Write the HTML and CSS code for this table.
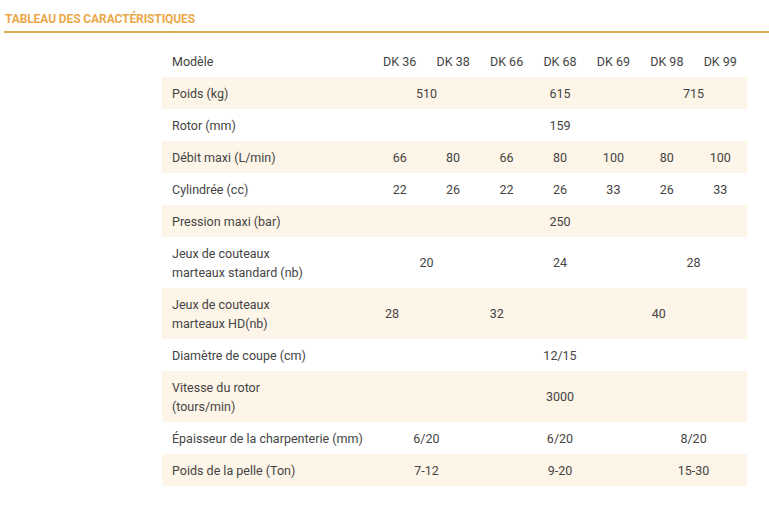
FILE: index.html
```html
<!DOCTYPE html>
<html lang="fr">
<head>
<meta charset="utf-8">
<title>Tableau des caractéristiques</title>
<link rel="stylesheet" href="styles.css">
</head>
<body>
<section class="specs">
  <h2 class="specs-title">TABLEAU DES CARACTÉRISTIQUES</h2>
  <div class="table-wrap">
    <table class="spec-table">
      <colgroup>
        <col class="col-label">
        <col><col><col><col><col><col><col>
      </colgroup>
      <tbody>
        <tr class="row">
          <td class="label">Modèle</td>
          <td>DK 36</td><td>DK 38</td><td>DK 66</td><td>DK 68</td><td>DK 69</td><td>DK 98</td><td>DK 99</td>
        </tr>
        <tr class="row alt">
          <td class="label">Poids (kg)</td>
          <td colspan="2">510</td><td colspan="3">615</td><td colspan="2">715</td>
        </tr>
        <tr class="row">
          <td class="label">Rotor (mm)</td>
          <td colspan="7">159</td>
        </tr>
        <tr class="row alt">
          <td class="label">Débit maxi (L/min)</td>
          <td>66</td><td>80</td><td>66</td><td>80</td><td>100</td><td>80</td><td>100</td>
        </tr>
        <tr class="row">
          <td class="label">Cylindrée (cc)</td>
          <td>22</td><td>26</td><td>22</td><td>26</td><td>33</td><td>26</td><td>33</td>
        </tr>
        <tr class="row alt">
          <td class="label">Pression maxi (bar)</td>
          <td colspan="7">250</td>
        </tr>
        <tr class="row">
          <td class="label">Jeux de couteaux<br>marteaux standard (nb)</td>
          <td colspan="2">20</td><td colspan="3">24</td><td colspan="2">28</td>
        </tr>
        <tr class="row alt">
          <td class="label">Jeux de couteaux<br>marteaux HD(nb)</td>
          <td colspan="2" class="shift shift-a">28</td><td colspan="2" class="shift shift-b">32</td><td colspan="3" class="shift shift-c">40</td>
        </tr>
        <tr class="row">
          <td class="label">Diamètre de coupe (cm)</td>
          <td colspan="7">12/15</td>
        </tr>
        <tr class="row alt">
          <td class="label">Vitesse du rotor<br>(tours/min)</td>
          <td colspan="7">3000</td>
        </tr>
        <tr class="row">
          <td class="label">Épaisseur de la charpenterie (mm)</td>
          <td colspan="2">6/20</td><td colspan="3">6/20</td><td colspan="2">8/20</td>
        </tr>
        <tr class="row alt">
          <td class="label">Poids de la pelle (Ton)</td>
          <td colspan="2">7-12</td><td colspan="3">9-20</td><td colspan="2">15-30</td>
        </tr>
      </tbody>
    </table>
  </div>
</section>
</body>
</html>
```
FILE: styles.css
```css
html, body {
  margin: 0;
  padding: 0;
  background: #ffffff;
}

body {
  font-family: Roboto, "Liberation Sans", sans-serif;
  color: #444444;
}

.specs {
  padding-top: 12px;
}

.specs-title {
  margin: 0 0 0 4px;
  padding: 0 0 0 1px;
  font-size: 12px;
  line-height: 14px;
  font-weight: 700;
  color: #e9a84a;
  letter-spacing: -0.1px;
  padding-bottom: 5px;
  border-bottom: 2px solid #dcad48;
}

.table-wrap {
  padding: 12px 22px 0 162px;
}

.spec-table {
  width: 585px;
  table-layout: fixed;
  border-collapse: collapse;
  font-size: 12.5px;
  line-height: 19px;
}

.col-label {
  width: 211px;
}

.spec-table td {
  padding: 6.5px 0;
  text-align: center;
  vertical-align: middle;
  white-space: nowrap;
}

.spec-table td.label {
  text-align: left;
  padding-left: 10px;
}

.row.alt {
  background: #fdf5e8;
}

.spec-table td.shift {
  text-align: left;
}

.spec-table td.shift-a { padding-left: 12px; }
.spec-table td.shift-b { padding-left: 10px; }
.spec-table td.shift-c { padding-left: 65px; }
```
